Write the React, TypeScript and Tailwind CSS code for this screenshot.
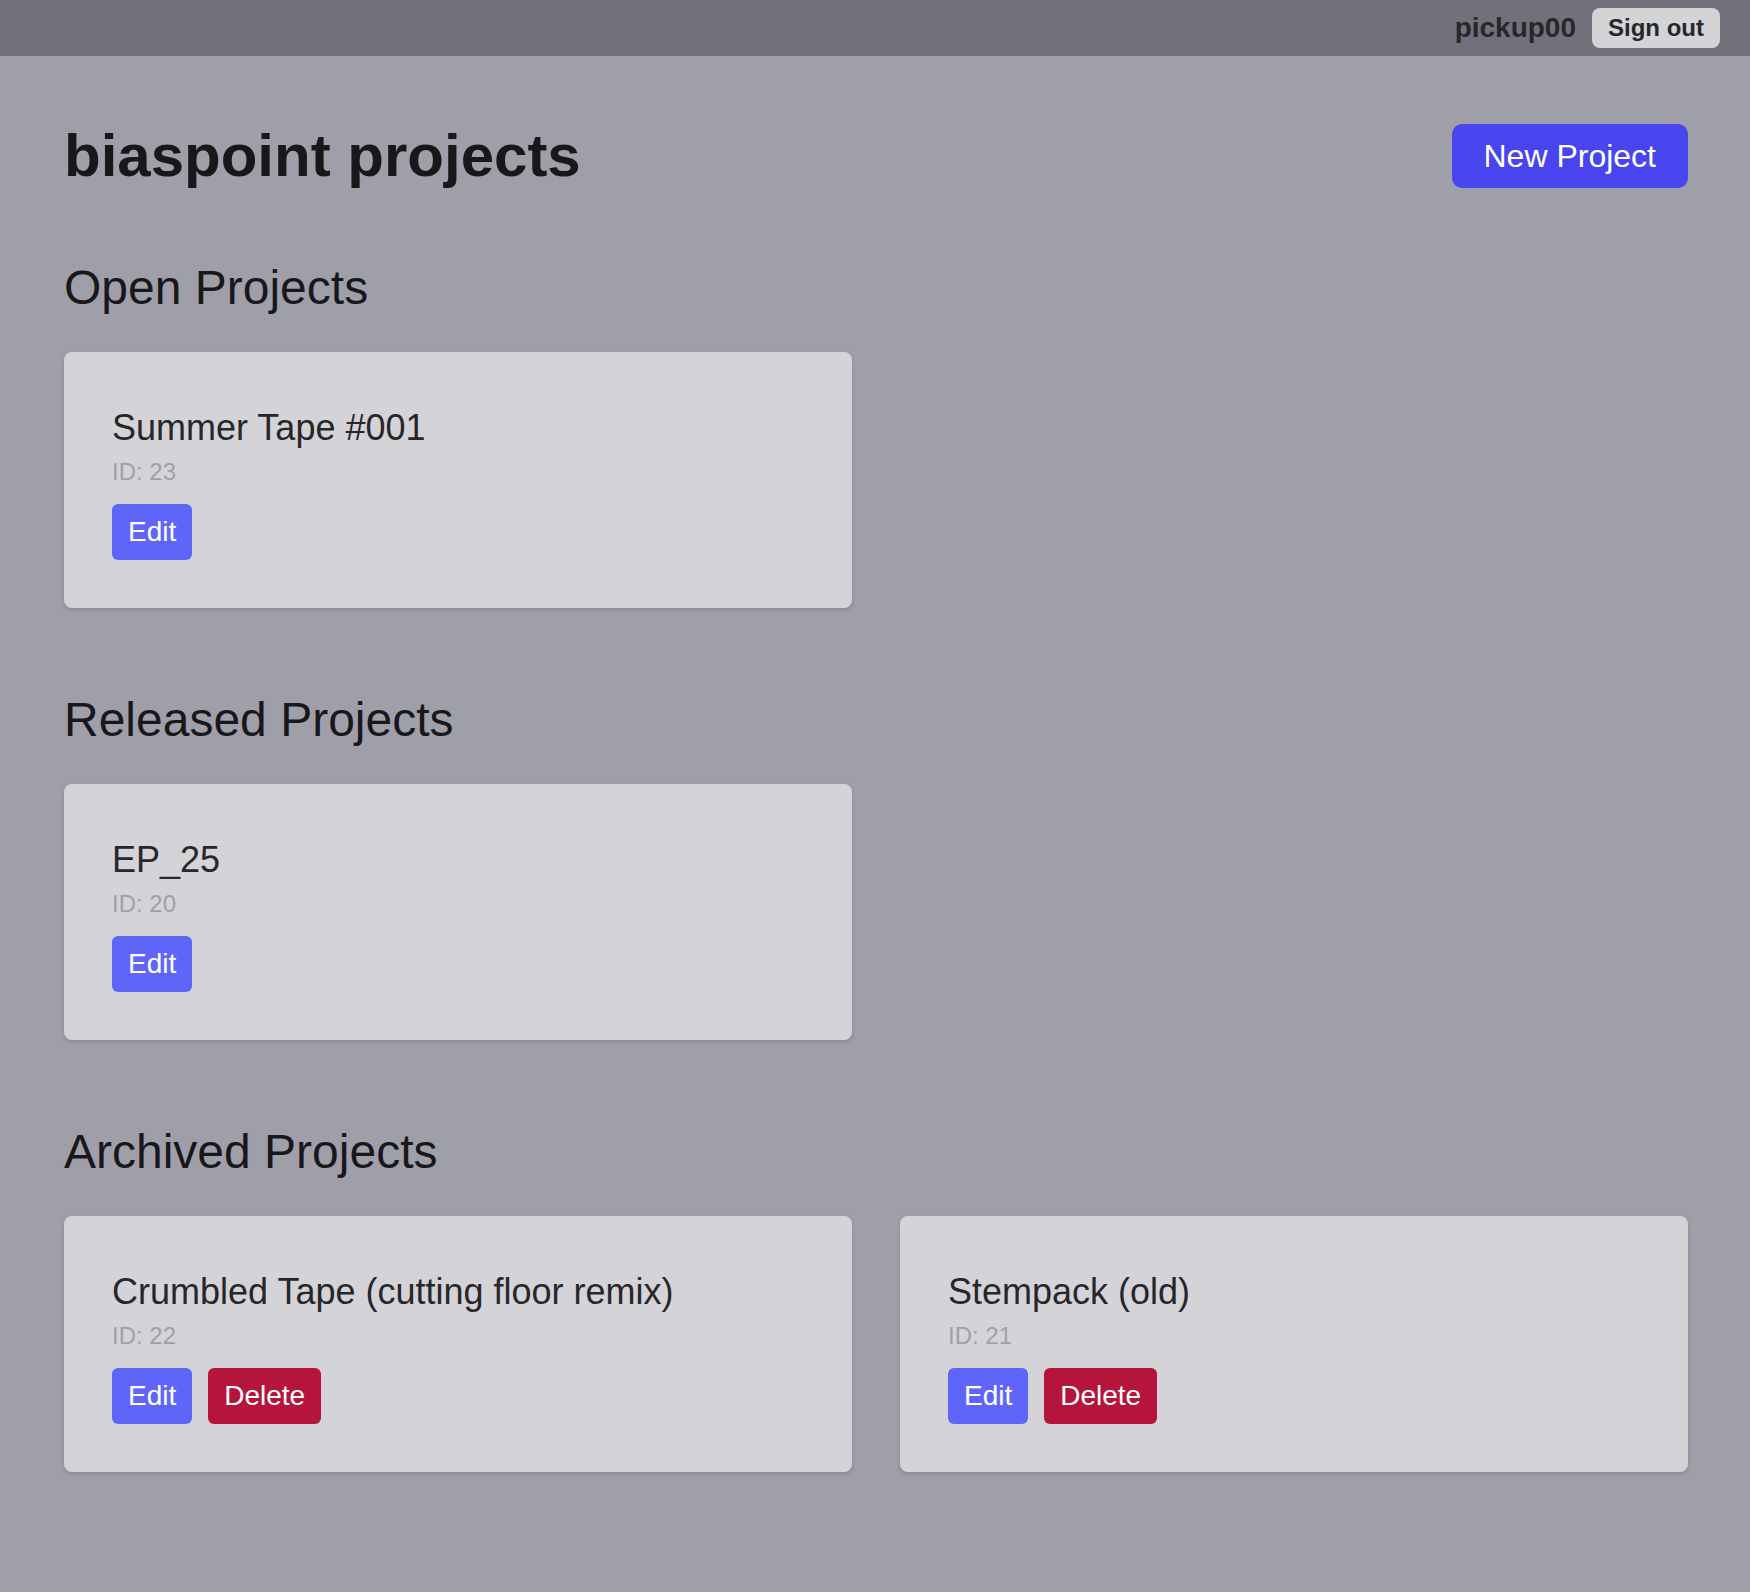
const sections = [
  {
    title: "Open Projects",
    projects: [{ name: "Summer Tape #001", id: 23, deletable: false }],
  },
  {
    title: "Released Projects",
    projects: [{ name: "EP_25", id: 20, deletable: false }],
  },
  {
    title: "Archived Projects",
    projects: [
      { name: "Crumbled Tape (cutting floor remix)", id: 22, deletable: true },
      { name: "Stempack (old)", id: 21, deletable: true },
    ],
  },
];

type Project = { name: string; id: number; deletable: boolean };

const ProjectCard = ({ project }: { project: Project }) => (
  <div className="bg-[#d4d4d8] rounded-[8px] p-12 shadow-[0_2px_4px_rgba(0,0,0,0.14)]">
    <h3 className="text-[36px] leading-[56px] text-[#27272a]">{project.name}</h3>
    <p className="text-[24px] leading-[32px] text-[#9f9fa9]">ID: {project.id}</p>
    <div className="mt-4 flex gap-4">
      <button className="bg-[#6065fa] text-white text-[28px] leading-[40px] px-4 py-2 rounded-[6px]">
        Edit
      </button>
      {project.deletable && (
        <button className="bg-[#b5153b] text-white text-[28px] leading-[40px] px-4 py-2 rounded-[6px]">
          Delete
        </button>
      )}
    </div>
  </div>
);

export default function App() {
  return (
    <div className="min-h-screen bg-[#9f9fa9] font-['Liberation_Sans',Arial,sans-serif]">
      <nav className="h-[56px] bg-[#71717b] flex items-center justify-end gap-4 px-[30px]">
        <span className="text-[28px] font-bold text-[#27272a]">pickup00</span>
        <button className="bg-[#d4d4d8] text-[#27272a] text-[24px] leading-[32px] font-bold px-4 py-1 rounded-[8px]">
          Sign out
        </button>
      </nav>

      <main className="pl-16 pr-[62px] pt-16 pb-16">
        <div className="flex items-center justify-between mb-16">
          <h1 className="text-[60px] leading-[72px] font-bold text-[#18181b]">biaspoint projects</h1>
          <button className="bg-[#4845ee] text-white text-[32px] leading-[48px] px-8 py-2 rounded-[10px]">
            New Project
          </button>
        </div>

        <div className="flex flex-col gap-20">
          {sections.map((section) => (
            <section key={section.title}>
              <h2 className="text-[48px] leading-[64px] text-[#18181b] mb-8">{section.title}</h2>
              <div className="grid grid-cols-2 gap-12">
                {section.projects.map((p) => (
                  <ProjectCard key={p.id} project={p} />
                ))}
              </div>
            </section>
          ))}
        </div>
      </main>
    </div>
  );
}
